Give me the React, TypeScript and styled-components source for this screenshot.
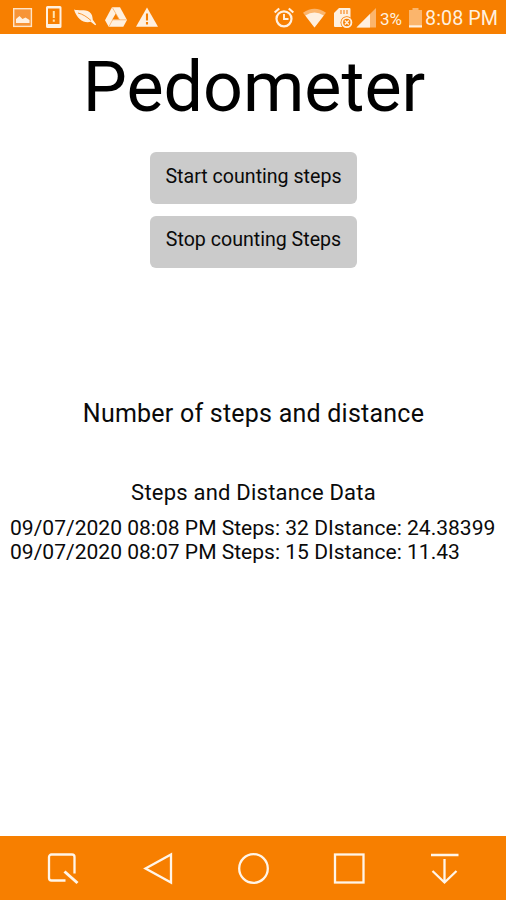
import React from "react";
import styled, { createGlobalStyle } from "styled-components";

const GlobalStyle = createGlobalStyle`
  * { box-sizing: border-box; }
  body { margin: 0; background: #fff; font-family: Roboto, "Liberation Sans", sans-serif; color: #0a0a0a; }
`;

const Screen = styled.div`
  width: 506px;
  height: 900px;
  display: flex;
  flex-direction: column;
  background: #fff;
  overflow: hidden;
`;

const StatusBar = styled.header`
  height: 34px;
  flex: none;
  display: flex;
  justify-content: space-between;
  padding: 0 8px 0 12px;
  background: #f77f00;
  color: #fff0df;
`;

const StatusGroup = styled.div<{ $gap: number }>`
  display: flex;
  align-items: center;
  gap: ${(p) => p.$gap}px;
  height: 34px;
`;

const StatusIcon = styled.svg<{ $w?: number }>`
  width: ${(p) => p.$w ?? 22}px;
  height: 24px;
  flex: none;
  display: block;
  overflow: visible;
`;

const StatusText = styled.span<{ $size: number; $width: number; $tracking?: number }>`
  width: ${(p) => p.$width}px;
  font-size: ${(p) => p.$size}px;
  letter-spacing: ${(p) => p.$tracking ?? 0}px;
  line-height: 24px;
  padding-top: 3px;
  white-space: nowrap;
`;

const Content = styled.main`
  flex: 1;
  display: flex;
  flex-direction: column;
  align-items: center;
`;

const Title = styled.h1`
  margin: 0;
  padding-left: 2px;
  font-size: 70px;
  font-weight: 400;
  line-height: 106px;
  height: 118.4px;
  letter-spacing: 0;
  color: #000;
  white-space: nowrap;
`;

const Actions = styled.div`
  display: flex;
  flex-direction: column;
  gap: 11.6px;
  width: 207px;
  margin-left: 1px;
`;

const ActionButton = styled.button`
  height: 51.8px;
  padding: 0 0 4px;
  border: 0;
  border-radius: 6px;
  background: #cbcbcb;
  color: #0a0a0a;
  font-family: inherit;
  font-size: 19.6px;
  white-space: nowrap;
`;

const Summary = styled.h2`
  margin: 129px 0 0;
  padding-left: 1px;
  font-size: 25px;
  font-weight: 400;
  line-height: 34px;
  letter-spacing: 0.23px;
  white-space: nowrap;
`;

const DataHeading = styled.h3`
  margin: 47.4px 0 0;
  padding-left: 1px;
  font-size: 22px;
  font-weight: 400;
  line-height: 30px;
  letter-spacing: 0.22px;
  white-space: nowrap;
`;

const Log = styled.ul`
  align-self: stretch;
  margin: 7.6px 0 0;
  padding: 0 0 0 10px;
  list-style: none;
`;

const LogEntry = styled.li`
  font-size: 21.05px;
  line-height: 24.6px;
  white-space: nowrap;
`;

const NavBar = styled.nav`
  height: 64.5px;
  flex: none;
  display: grid;
  grid-template-columns: repeat(5, 95.7px);
  justify-content: center;
  align-items: center;
  background: #f77f00;
`;

const NavButton = styled.button`
  height: 64px;
  padding: 0;
  border: 0;
  background: none;
  display: flex;
  align-items: center;
  justify-content: center;
`;

const NavIcon = styled.svg`
  width: 40px;
  height: 40px;
  fill: none;
  stroke: #fff5e8;
  stroke-width: 2.3;
`;

const entries = [
  { date: "09/07/2020", time: "08:08 PM", steps: 32, distance: "24.38399" },
  { date: "09/07/2020", time: "08:07 PM", steps: 15, distance: "11.43" },
];

const navItems = [
  { label: "Capture", icon: <><path d="M23.5 32.500H9.500a2.500 2.500 0 0 1-2.500-2.500V9a2.500 2.500 0 0 1 2.500-2.500h20.500a2.500 2.500 0 0 1 2.500 2.500v16.500" /><path d="M22.500 23.500 35.500 35" strokeWidth="3" /></> },
  { label: "Back", icon: <path d="M8.5 20.5 34 6.5v28z" /> },
  { label: "Home", icon: <circle cx="20.5" cy="20.5" r="14.3" /> },
  { label: "Recent", icon: <rect x="6" y="6.5" width="28.5" height="28" /> },
  { label: "Notifications", icon: <path d="M7 7h27.5M20.5 11v23M8.500 23l12 11.500 12-11.500" /> },
];

export default function App() {
  return (
    <>
      <GlobalStyle />
      <Screen>
        <StatusBar>
          <StatusGroup $gap={9}>
            <StatusIcon viewBox="0 0 22 24">
              <rect x="1.700" y="3.700" width="17.700" height="17.700" fill="#f79436" stroke="#ffe4c7" strokeWidth="1.4" />
              <path d="M4 18v-4l3.500-3 3 3 3-1.500 4 2.500v3z" fill="#fff0df" />
            </StatusIcon>
            <StatusIcon viewBox="0 0 22 24">
              <path fillRule="evenodd" d="M4.500 1h12.500a1.500 1.500 0 0 1 1.500 1.500v19a1.500 1.500 0 0 1-1.500 1.500H4.500A1.500 1.500 0 0 1 3 21.500V2.500A1.500 1.500 0 0 1 4.500 1zM5 3.500v15.500h11.500V3.500z" fill="#fff0df" />
              <path d="M10.800 6v7M10.800 14.500v2.300" stroke="#ffe4b0" strokeWidth="2" />
            </StatusIcon>
            <StatusIcon viewBox="0 0 22 24">
              <path d="M0 4.500c4 1.500 11-.5 15.500 2.500 2.700 2 3 5 3.300 7.800l3.400 4.700-1 .8-4.500-3.500C10 18.500 3 14.500 0 4.500z" fill="#fff0df" />
              <path d="M4 8c5 1.200 9 4 13 7.500" stroke="#f77f00" strokeWidth=".8" fill="none" />
            </StatusIcon>
            <StatusIcon viewBox="0 0 22 24">
              <path d="M7 2.300h8l7 12.700-3.700 6.700H3.700L0 15.200z" fill="#fff0df" />
              <path d="M10.800 8.500 14.300 14.500H7.300z" fill="#f77f00" />
              <path d="m7.300 2.500 7.300 12.500M4 21.500l3.500-6.500M7 14.800h14.500" stroke="#f9a653" strokeWidth=".7" />
            </StatusIcon>
            <StatusIcon viewBox="0 0 22 24">
              <path d="M11 2.500 22 21.700H0z" fill="#fff0df" />
              <path d="M11 8.500v7M11 17v2.500" stroke="#f77f00" strokeWidth="2.100" />
            </StatusIcon>
          </StatusGroup>
          <StatusGroup $gap={0}>
            <StatusIcon $w={28} viewBox="0 0 28 24" fill="none" stroke="#fff0df">
              <circle cx="10" cy="13.800" r="7.500" strokeWidth="2.200" />
              <path d="M10 9v5h4.500" strokeWidth="1.900" />
              <path d="m.7 7.500 4.500-4M19.300 7.500l-4.500-4" strokeWidth="2.200" />
            </StatusIcon>
            <StatusIcon $w={31} viewBox="0 0 31 24">
              <path d="M1 7.700Q12.500 0 24 7.700L12.500 22.500z" fill="#fbb56c" />
              <path d="M3.300 10.500q9.200-6 18.400 0l-9.200 12z" fill="#fff0df" />
            </StatusIcon>
            <StatusIcon $w={25} viewBox="0 0 25 24">
              <path d="M6 3h10.500q1 0 1 1v17q0 1-1 1H2q-1 0-1-1V8z" fill="#fff0df" />
              <path d="M8 5v4M11 5v4M14 5v4" stroke="#f79436" strokeWidth="1.300" />
              <circle cx="13.800" cy="17.500" r="6.300" fill="#f77f00" />
              <circle cx="13.800" cy="17.500" r="4.600" fill="none" stroke="#fff0df" strokeWidth="1.800" />
              <path d="m11.800 15.500 4 4m0-4-4 4" stroke="#fff0df" strokeWidth="1.500" />
            </StatusIcon>
            <StatusIcon $w={22} viewBox="0 0 22 24">
              <path d="M18 3v19.500H-1.500z" fill="#fbb56c" />
              <path d="M12 9v13.500H-1.500z" fill="#fff0df" />
            </StatusIcon>
            <StatusText $size={17} $width={28} $tracking={0}>3%</StatusText>
            <StatusIcon $w={17} viewBox="0 0 17 24">
              <path d="M4.500 5V3h6v2H14v17H1V5z" fill="#fbb56c" />
              <path d="M1 20.300h13v2.200H1z" fill="#fff0df" />
            </StatusIcon>
            <StatusText $size={19.7} $width={73} $tracking={0.1}>8:08 PM</StatusText>
          </StatusGroup>
        </StatusBar>
        <Content>
          <Title>Pedometer</Title>
          <Actions>
            <ActionButton>Start counting steps</ActionButton>
            <ActionButton>Stop counting Steps</ActionButton>
          </Actions>
          <Summary>Number of steps and distance</Summary>
          <DataHeading>Steps and Distance Data</DataHeading>
          <Log>
            {entries.map((e) => (
              <LogEntry key={e.time}>
                {`${e.date} ${e.time} Steps: ${e.steps} DIstance: ${e.distance}`}
              </LogEntry>
            ))}
          </Log>
        </Content>
        <NavBar>
          {navItems.map((item) => (
            <NavButton key={item.label} aria-label={item.label}>
              <NavIcon viewBox="0 0 40 40">{item.icon}</NavIcon>
            </NavButton>
          ))}
        </NavBar>
      </Screen>
    </>
  );
}
